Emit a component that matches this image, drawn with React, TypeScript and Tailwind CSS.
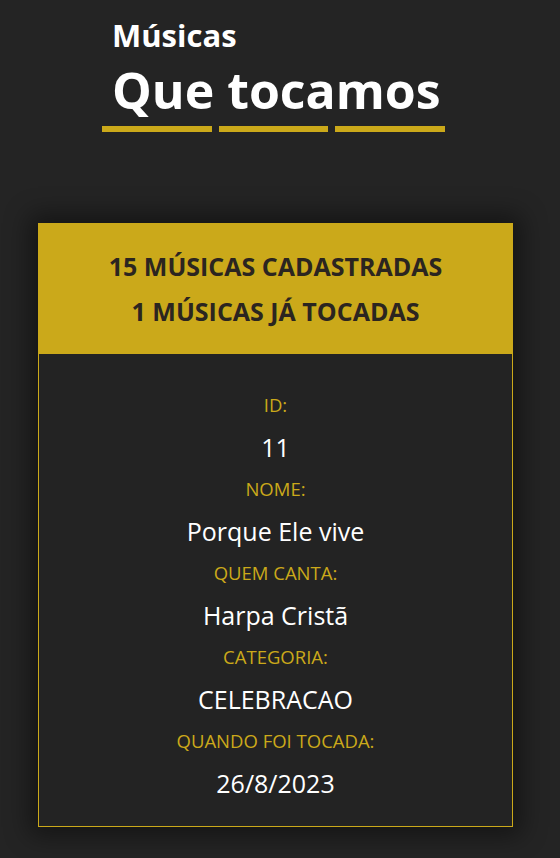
import React from 'react';

const musica = {
  id: 11,
  nome: 'Porque Ele vive',
  quemCanta: 'Harpa Cristã',
  categoria: 'CELEBRACAO',
  tocadaEm: '26/8/2023',
};

function Campo({ label, value }: { label: string; value: string | number }) {
  return (
    <>
      <p className="text-[18.5px] leading-[42px] text-[#cba91a]">{label}</p>
      <p className="text-[25px] leading-[42px] text-white">{value}</p>
    </>
  );
}

export default function App() {
  return (
    <div className="min-h-[858px] bg-[#242424] font-['Open_Sans',sans-serif]">
      {/* Titulo */}
      <header className="pl-[102px] pt-[14px]">
        <div className="pl-[10px]">
          <h2 className="text-[31px] font-bold leading-[42px] text-white">Músicas</h2>
          <h1 className="text-[50px] font-bold leading-[68px] text-white">Que tocamos</h1>
        </div>
        <div className="mt-[2px] flex gap-[7px]">
          <span className="h-[6px] w-[110px] bg-[#cba91a]" />
          <span className="h-[6px] w-[109px] bg-[#cba91a]" />
          <span className="h-[6px] w-[110px] bg-[#cba91a]" />
        </div>
      </header>

      {/* Card */}
      <section className="mx-[38px] mt-[91px] w-[475px] shadow-[0_0_24px_8px_rgba(0,0,0,0.45)]">
        <div className="bg-[#cba91a] pt-[21px] pb-[20px] text-center text-[25px] font-bold leading-[45px] text-[#2b2520]">
          <p>15 MÚSICAS CADASTRADAS</p>
          <p>1 MÚSICAS JÁ TOCADAS</p>
        </div>
        <div className="border border-t-0 border-[#cba91a] bg-[#232323] pt-[30px] pb-[22px] text-center">
          <Campo label="ID:" value={musica.id} />
          <Campo label="NOME:" value={musica.nome} />
          <Campo label="QUEM CANTA:" value={musica.quemCanta} />
          <Campo label="CATEGORIA:" value={musica.categoria} />
          <Campo label="QUANDO FOI TOCADA:" value={musica.tocadaEm} />
        </div>
      </section>
    </div>
  );
}
